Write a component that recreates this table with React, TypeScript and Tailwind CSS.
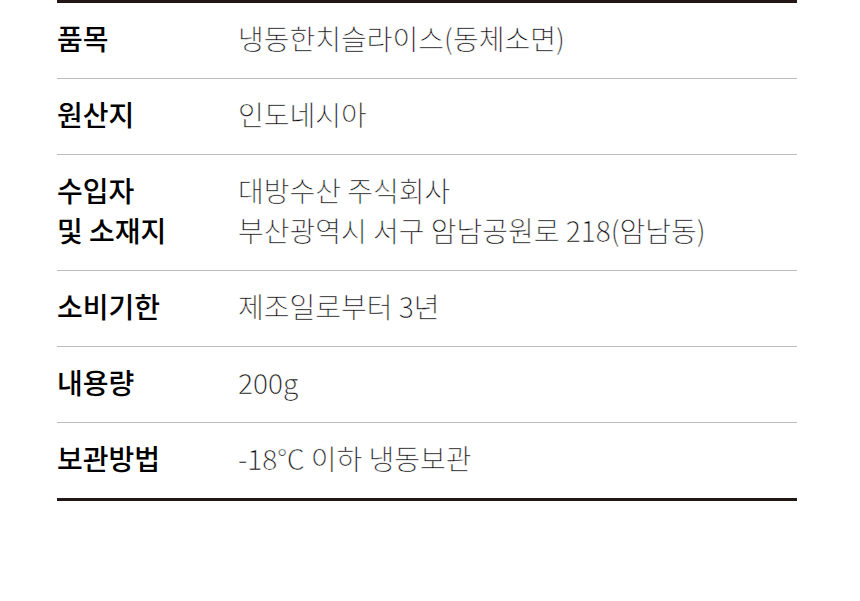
import React from "react";

const rows: { label: string[]; value: string[] }[] = [
  { label: ["품목"], value: ["냉동한치슬라이스(동체소면)"] },
  { label: ["원산지"], value: ["인도네시아"] },
  { label: ["수입자", "및 소재지"], value: ["대방수산 주식회사", "부산광역시 서구 암남공원로 218(암남동)"] },
  { label: ["소비기한"], value: ["제조일로부터 3년"] },
  { label: ["내용량"], value: ["200g"] },
  { label: ["보관방법"], value: ["-18°C 이하 냉동보관"] },
];

export default function App() {
  return (
    <div className="w-[860px] h-[601px] bg-white" style={{ fontFamily: '"Noto Sans CJK KR", "Noto Sans", sans-serif' }}>
      <div className="ml-[57px] w-[740px] border-t-[3px] border-b-[3px] border-[#231815]">
        {rows.map((r, i) => (
          <div
            key={i}
            className={
              "flex pt-[15px] pb-[20px] text-[28px] leading-[40px] tracking-[0px] " +
              (i < rows.length - 1 ? "border-b border-[#bdbdbd]" : "")
            }
          >
            <div className="w-[181px] shrink-0 font-medium text-[#000000]">
              {r.label.map((l, j) => (
                <div key={j}>{l}</div>
              ))}
            </div>
            <div className="font-light text-[#000000] [-webkit-text-stroke:0.4px_#ffffff]">
              {r.value.map((v, j) => (
                <div key={j}>{v}</div>
              ))}
            </div>
          </div>
        ))}
      </div>
    </div>
  );
}
